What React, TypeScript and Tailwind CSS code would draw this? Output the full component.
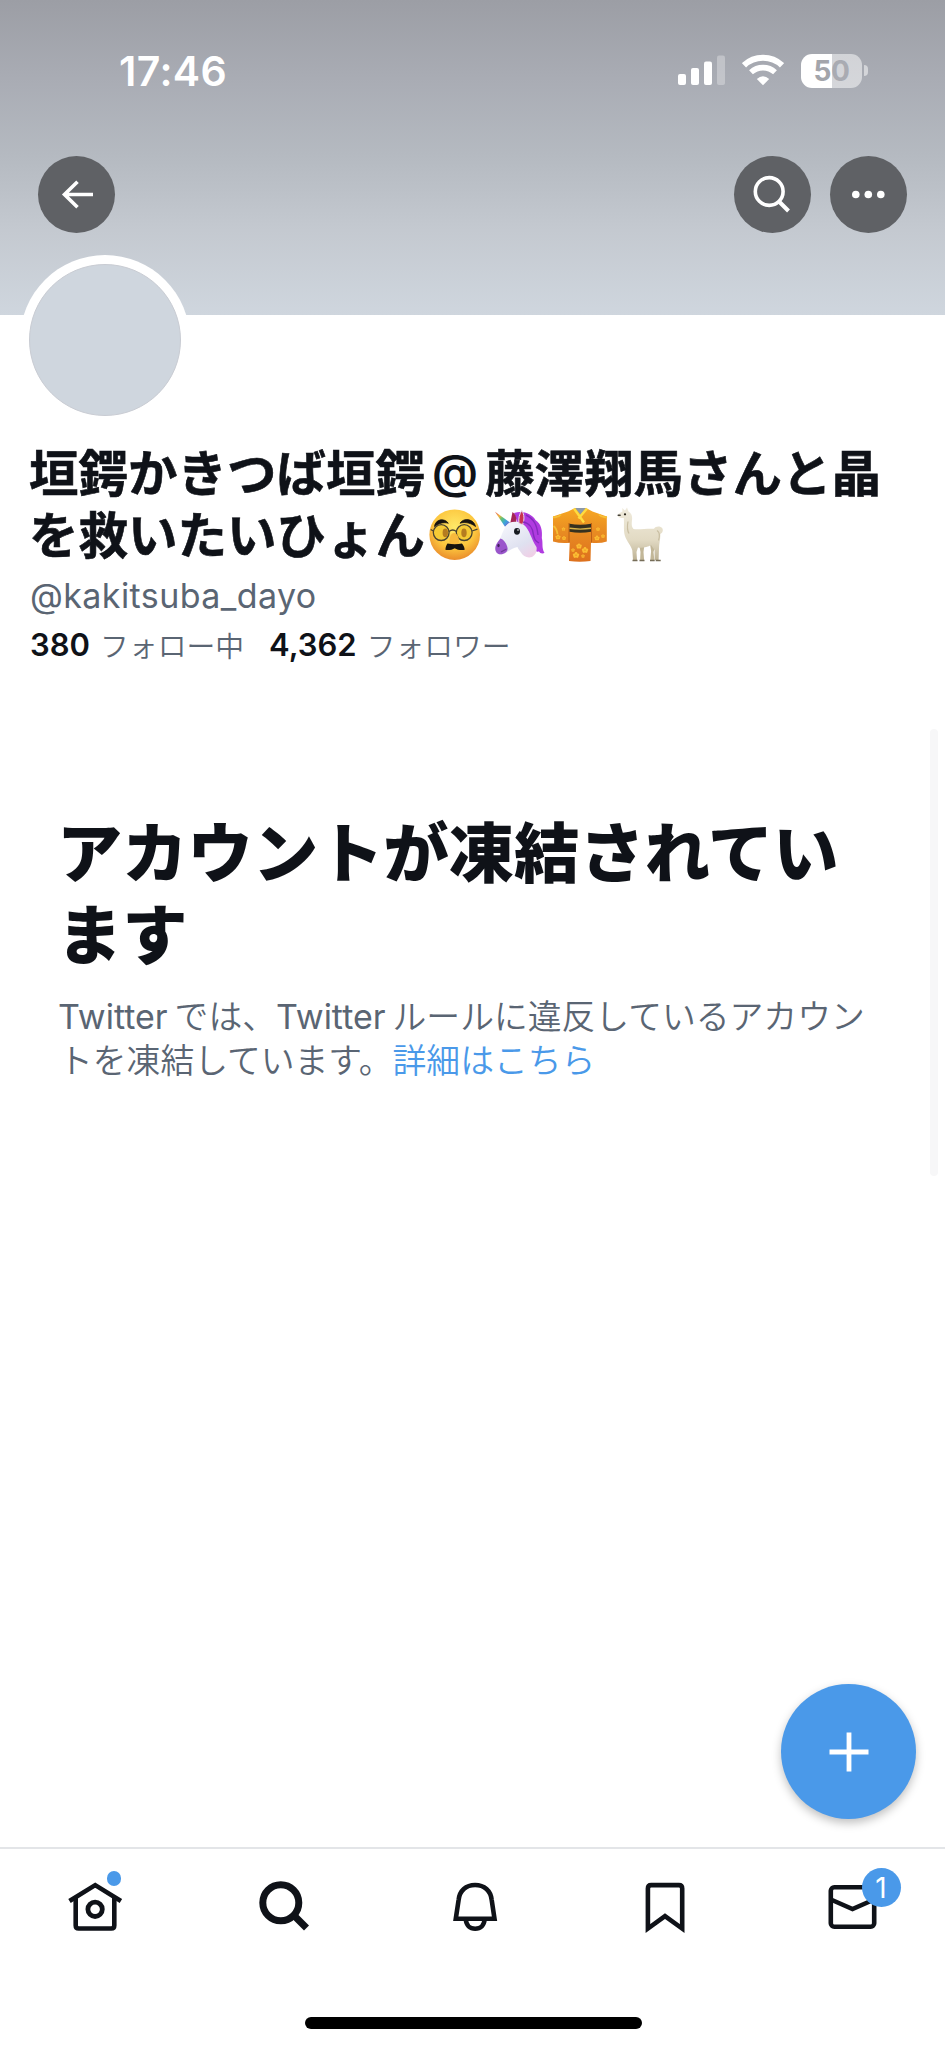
import type { ReactNode } from "react";

const DisguisedFace = () => (
  <svg className="mt-1 h-[58px] w-[62px] shrink-0" viewBox="0 0 62 58" fill="none">
    <defs>
      <radialGradient id="face" cx="0.5" cy="0.35" r="0.68">
        <stop offset="0" stopColor="#ffe968" />
        <stop offset="0.6" stopColor="#fcc63e" />
        <stop offset="1" stopColor="#e8862a" />
      </radialGradient>
    </defs>
    <circle cx="29.7" cy="28.7" r="25.3" fill="url(#face)" />
    <circle cx="16.2" cy="26.6" r="7.9" fill="#f5ca35" stroke="#4a4330" strokeWidth="1.3" />
    <circle cx="39.2" cy="26.6" r="7.9" fill="#f5ca35" stroke="#4a4330" strokeWidth="1.3" />
    <path d="M24 25.5q3.7-3 7.4 0M8.3 25l-2.6-1.5M47 25l5.5-1.8" stroke="#4a4330" strokeWidth="1.3" />
    <ellipse cx="20.3" cy="26.8" rx="2.7" ry="4.4" fill="#b57c20" />
    <ellipse cx="39" cy="26.8" rx="2.7" ry="4.4" fill="#b57c20" />
    <path d="M24.5 35c0-4 1.500-8 4.500-8s5 4 5 8-2 4-5 4-4.500 0-4.500-4Z" fill="#f8b93c" />
    <path d="M9.500 20.500c.6-6.500 9-9.500 13.800-3.300-5-1.300-9.600 0-13.800 3.300ZM35 17.200c4-6.200 14-4 15.500 3.300-4.500-3.500-10-4.800-15.500-3.300Z" fill="#17130f" stroke="#17130f" strokeWidth=".8" strokeLinejoin="round" />
    <path d="M22.500 37.500q7.200 1.600 14.400 0c1.500 1.500 2.500 3.500 2.800 6.300-3 .6-7.500.2-10-1.600-2.500 1.800-6.500 2.200-9.300 1.600.2-2.800.9-4.800 2.100-6.300Z" fill="#17130f" />
  </svg>
);

const Unicorn = () => (
  <svg className="mt-1 h-[58px] w-[62px] shrink-0" viewBox="0 0 62 58" fill="none">
    <defs>
      <linearGradient id="horn" x1="8" y1="6" x2="22" y2="19" gradientUnits="userSpaceOnUse">
        <stop offset="0" stopColor="#e2574c" />
        <stop offset="0.3" stopColor="#f2b23c" />
        <stop offset="0.5" stopColor="#62c275" />
        <stop offset="0.75" stopColor="#38a5dd" />
        <stop offset="1" stopColor="#7b64cf" />
      </linearGradient>
      <linearGradient id="head" x1="20" y1="16" x2="42" y2="52" gradientUnits="userSpaceOnUse">
        <stop offset="0" stopColor="#f5f6fc" />
        <stop offset="0.65" stopColor="#dfe1f0" />
        <stop offset="1" stopColor="#f0cfe6" />
      </linearGradient>
    </defs>
    <path d="M27 7c8-3 18 .5 21.500 7 6 4 7 11 6.300 18 1.500 6-.5 9 2.700 15-2.500 1-4.500.2-5.500-1.500-4 1-6-3-6-6L33 23Z" fill="#b03be0" />
    <path d="m8 5.700 15 10.800-5 4.300Z" fill="url(#horn)" />
    <path d="M23 18.500 25.500 6c3 2 4.200 5 3.800 10Z" fill="#a32554" />
    <path d="M22 17c5-2 11-1.500 15 2 6 5 7 14 12.500 22 .8 4-1 8-4.500 10-5 1.500-9-1-11-4.500-1.500-2-2.800-3.500-3.500-5.500-5 1-8 3.500-12 6-4 2.500-8.500 1.500-10-2-1.500-4 1-7.500 4-11.500 2.500-4 4.500-13.500 9.500-16.500Z" fill="url(#head)" />
    <path d="M13.500 32.500c3 1 5.500 4 6.700 8 1 3 .3 4.800-2.200 6.500-4 2.500-8 1.400-9.300-2-1.500-4.500 1.500-8.500 4.800-12.500Z" fill="#9a55cb" />
    <path d="M32 17.500c-.8-5 .4-9.500 2.800-13 2.600 4 2.800 9 .8 14Z" fill="#c83450" stroke="#e6dcee" strokeWidth="1" />
    <path d="M36 16c6 1 10 6 10.500 13 1 5 2 6 5.500 8M39 9c8 4 11 10 12 20" stroke="#842bbd" strokeWidth="1.400" />
    <ellipse cx="30" cy="25.300" rx="3" ry="3.400" fill="#161a20" />
    <circle cx="31" cy="24" r=".8" fill="#fff" />
    <ellipse cx="11.500" cy="39.500" rx="1.200" ry="1.700" fill="#41205e" />
    <path d="m14 46 5.500-3" stroke="#6c3996" strokeWidth="1.200" />
  </svg>
);

const Kimono = () => (
  <svg className="mt-1 h-[58px] w-[62px] shrink-0" viewBox="0 0 62 58" fill="none">
    <defs>
      <linearGradient id="robe" x1="0" y1="2" x2="0" y2="56" gradientUnits="userSpaceOnUse">
        <stop offset="0" stopColor="#f7a823" />
        <stop offset="0.45" stopColor="#e88b22" />
        <stop offset="1" stopColor="#dd701d" />
      </linearGradient>
    </defs>
    <path d="m26 2-7 3.500L4 10.500V35.500q8 2.200 16.700 1.200L20 55q10.800 1.300 21.500 0L42 36.700q9 1 15.800-1.200V10.500L43.500 5.500 37 2Z" fill="url(#robe)" />
    <path d="M26 2h11l-5.500 6.500Z" fill="#8d99a9" />
    <path d="m25 2.500 10 14M38 2.500l-8.500 10" stroke="#ffdc3f" strokeWidth="2.400" />
    <path d="M20 17v19.500M42.500 17v19.500" stroke="#bd6017" strokeWidth="1" />
    <path d="M4 11q5 1 8-2.500M58 11q-5 1-8-2.500M4.500 20q3 2 4 8" stroke="#f6bf36" strokeWidth="1.800" />
    <path d="M20.500 17.800q10.700 1.700 21.500 0v8q-10.700 2-21.500 0Z" fill="#35301f" />
    <path d="M20.500 22.300q10.500 1.600 21.500 0" stroke="#d8b348" strokeWidth="1.400" />
    <g fill="#fbbd33">
      {[[9, 31, 1.9], [14.5, 23, 1.3], [15, 32, 1.5], [49, 23, 1.4], [54, 30, 1.4], [48, 32, 1.9], [30, 40, 2], [36, 44, 2.3], [27, 49, 2.3], [24, 44, 1.3], [34, 50, 1.3]].map(([x, y, r]) => (
        <g key={`${x}-${y}`}>
          <circle cx={x} cy={y - r * 0.7} r={r * 0.6} />
          <circle cx={x - r * 0.8} cy={y - r * 0.1} r={r * 0.6} />
          <circle cx={x + r * 0.8} cy={y - r * 0.1} r={r * 0.6} />
          <circle cx={x - r * 0.5} cy={y + r * 0.7} r={r * 0.6} />
          <circle cx={x + r * 0.5} cy={y + r * 0.7} r={r * 0.6} />
        </g>
      ))}
    </g>
  </svg>
);

const Llama = () => (
  <svg className="mt-1 h-[58px] w-[62px] shrink-0" viewBox="0 0 62 58" fill="none">
    <defs>
      <linearGradient id="wool" x1="0" y1="4" x2="0" y2="54" gradientUnits="userSpaceOnUse">
        <stop offset="0" stopColor="#efeadb" />
        <stop offset="0.6" stopColor="#e2dac3" />
        <stop offset="1" stopColor="#bdb295" />
      </linearGradient>
    </defs>
    <path d="M28 38h5.500l-1 8 .6 8h-4l.4-8ZM39 38h6l-2.500 8 .8 8h-4l.8-9Z" fill="#c2b798" />
    <path d="M11.500 5.500 11.200 2l2.800 2.600L16 1.500l1.500 4c3 1.500 4 4.500 3.500 8.500-.3 3.500-.8 6.500 1.500 9 6 .7 14-.7 20.500-.2 1.500-3 6.500-3.200 8.300-.5 1.200 2.200.2 4.500-2 5.700.3 5-1.300 9.500-1.300 14.500l-.4 11.500h-4L43.500 44l-3.500-5c-3.500 2.500-9 3-13 2.500L25.500 46l.5 8h-4l-.7-9.500c-1-4.500-5.500-9-7.500-15-1.500-5-.5-12-1-17.500-2 .3-4.800-.5-5.500-1.300-.5-1.200-.3-2.500.7-3.200Z" fill="url(#wool)" />
    <path d="M46 24.500q4 2.500 1.500 10M17 15.500q-1.500 8 1 12" stroke="#c9bea2" strokeWidth="1.200" />
    <path d="M21.500 54.500h5M28.500 54.500h5M39 54.500h4.700M44.700 54.500h5" stroke="#766d58" strokeWidth="1.500" />
    <circle cx="14" cy="8.300" r="1.100" fill="#252016" />
    <path d="M7.200 9.200h1.900" stroke="#44403a" strokeWidth="1.500" strokeLinecap="round" />
  </svg>
);

const StatusBar = () => (
  <div className="flex h-[142px] items-start justify-between pr-[77px] pl-[119px] text-white">
    <span className="mt-[46px] font-['Inter'] text-[41px] leading-[50px] font-semibold tracking-[0.4px]">17:46</span>
    <div className="mt-[53px] flex h-[35px] items-center">
      <svg className="h-[35px] w-[48px]" viewBox="0 0 48 35" fill="currentColor">
        <rect x="0" y="21" width="8" height="11" rx="2" />
        <rect x="13" y="15" width="8" height="17" rx="2" />
        <rect x="26" y="8.500" width="8" height="23.500" rx="2" />
        <rect x="39" y="2.500" width="8" height="29.500" rx="2" fillOpacity="0.3" />
      </svg>
      <svg className="ml-4 h-[35px] w-[42px]" viewBox="0 0 42 35" fill="none" stroke="currentColor">
        <path d="M2 12.300C12.500 2.300 29.500 2.300 40 12.300" strokeWidth="6" />
        <path d="M9 19.300c6.800-6.300 17.200-6.300 24 0" strokeWidth="5.600" />
        <path d="M14.800 26q6.200-5.300 12.400 0L21 32.200Z" fill="currentColor" stroke="none" />
      </svg>
      <div className="ml-[17px] flex h-[34px] w-[61px] items-center justify-center rounded-[11px] bg-[linear-gradient(90deg,#fff_50%,rgba(255,255,255,0.5)_50%)] font-['Inter'] text-[28px] leading-none font-bold tracking-[-0.5px]">
        <span className="text-[#a3a5ab]">5</span>
        <span className="text-[#a9abb2]">0</span>
      </div>
      <div className="ml-[2px] h-[11px] w-[4px] rounded-r-full bg-white/50" />
    </div>
  </div>
);

const RoundButton = ({ children }: { children: ReactNode }) => (
  <button className="flex size-[77px] items-center justify-center rounded-full bg-[#5f6165] text-white">
    <svg className="size-[77px]" viewBox="0 0 77 77" fill="none" stroke="currentColor" strokeWidth="3.600">
      {children}
    </svg>
  </button>
);

const Header = () => (
  <header className="h-[315px] bg-[linear-gradient(180deg,#9c9ea5_0%,#a9acb4_25%,#b5bac1_50%,#c4c9d0_73%,#cfd6de_100%)]">
    <StatusBar />
    <div className="mt-[14px] flex items-center gap-[19px] pr-[38px] pl-[38px]">
      <div className="flex-1">
        <RoundButton>
          <path d="M55 38.500H26M39.500 25.800 26.500 38.500l13 12.700" />
        </RoundButton>
      </div>
      <RoundButton>
        <circle cx="35.200" cy="35.500" r="13.900" />
        <path d="m45 45.500 9.500 9.500" strokeWidth="4" />
      </RoundButton>
      <RoundButton>
        <g fill="currentColor" stroke="none">
          <circle cx="25.800" cy="38.500" r="3.800" />
          <circle cx="38.300" cy="38.500" r="3.800" />
          <circle cx="50.800" cy="38.500" r="3.800" />
        </g>
      </RoundButton>
    </div>
  </header>
);

const Profile = () => (
  <section className="h-[414px] pl-[30px]">
    <div className="relative -mt-[60px] -ml-[10px] size-[170px] rounded-full bg-white p-[9px]">
      <div className="size-[152px] rounded-full border border-[#c9ccd3] bg-[#cfd6de]" />
    </div>
    <h1 className="mt-[15px] -ml-px font-['Noto_Sans_CJK_JP',sans-serif] text-[49.500px] leading-[62px] font-bold whitespace-nowrap text-[#0f1218] [-webkit-text-stroke:0.6px_#0f1218]">
      <span className="flex h-[62px]">
        垣鍔かきつば垣鍔<span className="w-[60px] text-center font-['Inter'] text-[46px] font-semibold [-webkit-text-stroke:0]">@</span>藤澤翔馬さんと晶
      </span>
      <span className="flex h-[62px] items-start">
        を救いたいひょん
        <DisguisedFace />
        <Unicorn />
        <Kimono />
        <Llama />
      </span>
    </h1>
    <p className="mt-[9px] font-['Inter'] text-[34px] leading-[46px] tracking-[0.42px] text-[#5a6573]">@kakitsuba_dayo</p>
    <div className="mt-[3px] flex items-center font-['Noto_Sans_CJK_JP',sans-serif] text-[28.800px] leading-[46px] whitespace-nowrap text-[#5a6573]">
      <b className="font-['Inter'] text-[31px] font-semibold text-[#0f1218]">380</b>
      <span className="ml-[10px] font-[350]">フォロー中</span>
      <b className="ml-[25px] font-['Inter'] text-[31px] font-semibold text-[#0f1218]">4,362</b>
      <span className="ml-[10px] font-[350]">フォロワー</span>
    </div>
  </section>
);

const Suspended = () => (
  <section className="flex h-[447px] justify-between pr-[7px] pl-[58px] font-['Noto_Sans_CJK_JP',sans-serif]">
    <div className="w-[830px] pt-[79px] whitespace-nowrap">
      <h2 className="-ml-px text-[65.300px] leading-[81.500px] font-black text-[#0f1218]">
        アカウントが凍結されてい
        <br />
        ます
      </h2>
      <p className="mt-[23px] text-[33.800px] leading-[42px] font-[350] text-[#5a6573]">
        <span className="font-['Inter'] text-[34px] font-normal">Twitter</span>
        <span className="ml-[7px]">では、</span>
        <span className="font-['Inter'] text-[34px] font-normal">Twitter</span>
        <span className="ml-[7px]">ルールに違反しているアカウン</span>
        <br />
        <span className="ml-px">トを凍結しています。</span>
        <a className="text-[#4a99e9]">詳細はこちら</a>
      </p>
    </div>
    <div className="w-2 rounded-full bg-[#f7f7f8]" />
  </section>
);

const Tab = ({ children, badge }: { children: ReactNode; badge?: ReactNode }) => (
  <button className="flex flex-1 justify-center text-[#0f1218]">
    <span className="relative size-[60px]">
      <svg className="size-[60px]" viewBox="0 0 60 60" fill="none" stroke="currentColor" strokeWidth="4.600" strokeMiterlimit="10">
        {children}
      </svg>
      {badge}
    </span>
  </button>
);

const TabBar = () => (
  <nav className="flex h-[201px] flex-col items-center border-t-2 border-[#e3e5e8] bg-white">
    <div className="mt-[27px] flex w-full">
      <Tab badge={<span className="absolute top-[-5px] left-[42px] size-[14.500px] rounded-full bg-[#4a99e9]" />}>
        <path d="M4.500 25 30.200 9.100 55.900 25" />
        <path d="M10.700 22v27.500q0 3 3 3h32.600q3 0 3-3V22" />
        <circle cx="30.100" cy="33.300" r="7.200" strokeWidth="4.800" />
      </Tab>
      <Tab>
        <circle cx="26.800" cy="26.700" r="18" strokeWidth="7" />
        <path d="m39.500 39 13 13" strokeWidth="7" />
      </Tab>
      <Tab>
        <path d="M12.800 42.700 15.600 24C16.500 14.500 23 9 32.100 9s15.700 5.500 16.600 15l2.800 18.700Z" />
        <path d="M22.800 43c.3 6.500 4.200 9.700 9.400 9.700s9.100-3.200 9.400-9.700" />
      </Tab>
      <Tab>
        <path d="M15.900 52.500V12.400q0-3.300 3.300-3.300h27.700q3.300 0 3.300 3.300v40.100L33 40.200Z" />
      </Tab>
      <Tab
        badge={
          <span className="absolute top-[-8px] left-[41px] flex size-[39px] items-center justify-center rounded-full bg-[#4a99e9] font-['Inter'] text-[28px] leading-none text-white">
            1
          </span>
        }
      >
        <rect x="9.800" y="11.300" width="43.400" height="39.400" rx="3.500" />
        <path d="m9.800 23.500 21.700 9.500 21.700-9.500" />
      </Tab>
    </div>
    <div className="mt-[81px] ml-px h-3 w-[337px] rounded-full bg-black" />
  </nav>
);

export default function App() {
  return (
    <div className="flex h-[2048px] w-[945px] flex-col overflow-hidden bg-white">
      <Header />
      <Profile />
      <Suspended />
      <div className="flex flex-1 items-end justify-end pr-[29px] pb-[28px]">
        <button className="flex size-[135px] items-center justify-center rounded-full bg-[#4a99e9] shadow-[0_4px_10px_rgba(0,0,0,0.25)]">
          <svg className="size-[40px]" viewBox="0 0 40 40" stroke="#fff" strokeWidth="4.800">
            <path d="M20 .5v39M.5 20h39" />
          </svg>
        </button>
      </div>
      <TabBar />
    </div>
  );
}
